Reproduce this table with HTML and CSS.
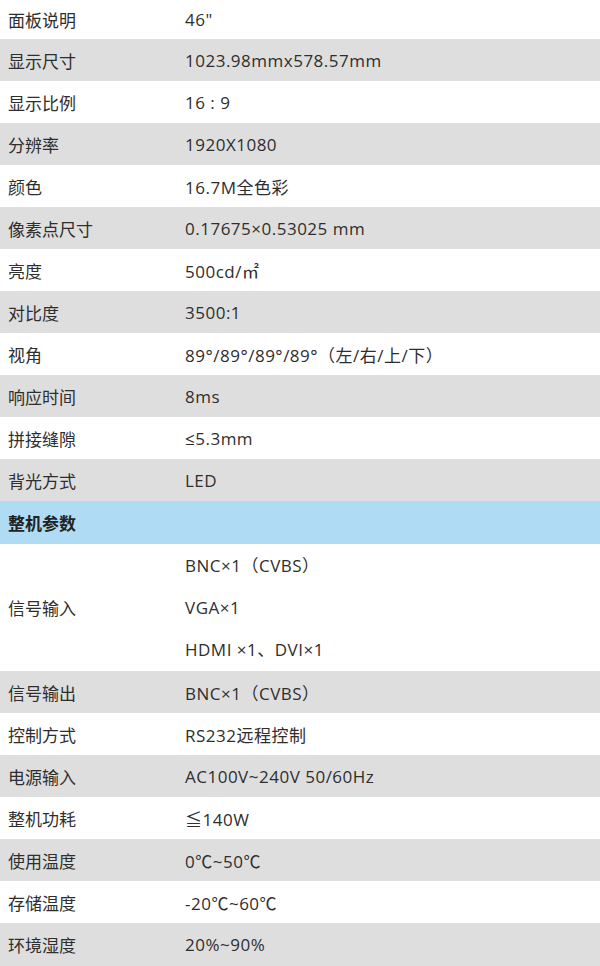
FILE: index.html
```html
<!DOCTYPE html>
<html lang="zh">
<head>
<meta charset="utf-8">
<link rel="stylesheet" href="styles.css">
</head>
<body>
<div class="spec">
  <div class="row first"><div class="k">面板说明</div><div class="v">46"</div></div>
  <div class="row alt"><div class="k">显示尺寸</div><div class="v">1023.98mmx578.57mm</div></div>
  <div class="row"><div class="k">显示比例</div><div class="v">16 : 9</div></div>
  <div class="row alt"><div class="k">分辨率</div><div class="v">1920X1080</div></div>
  <div class="row"><div class="k">颜色</div><div class="v">16.7M全色彩</div></div>
  <div class="row alt"><div class="k">像素点尺寸</div><div class="v">0.17675×0.53025 mm</div></div>
  <div class="row"><div class="k">亮度</div><div class="v">500cd/㎡</div></div>
  <div class="row alt"><div class="k">对比度</div><div class="v">3500:1</div></div>
  <div class="row"><div class="k">视角</div><div class="v">89°/89°/89°/89°（左/右/上/下）</div></div>
  <div class="row alt"><div class="k">响应时间</div><div class="v">8ms</div></div>
  <div class="row"><div class="k">拼接缝隙</div><div class="v">≤5.3mm</div></div>
  <div class="row alt"><div class="k">背光方式</div><div class="v">LED</div></div>
  <div class="row head"><div class="k">整机参数</div><div class="v"></div></div>
  <div class="row tall"><div class="k">信号输入</div><div class="v multi"><span>BNC×1（CVBS）</span><span>VGA×1</span><span>HDMI ×1、DVI×1</span></div></div>
  <div class="row alt"><div class="k">信号输出</div><div class="v">BNC×1（CVBS）</div></div>
  <div class="row"><div class="k">控制方式</div><div class="v">RS232远程控制</div></div>
  <div class="row alt"><div class="k">电源输入</div><div class="v">AC100V~240V 50/60Hz</div></div>
  <div class="row"><div class="k">整机功耗</div><div class="v">≦140W</div></div>
  <div class="row alt"><div class="k">使用温度</div><div class="v">0℃~50℃</div></div>
  <div class="row"><div class="k">存储温度</div><div class="v">-20℃~60℃</div></div>
  <div class="row alt last"><div class="k">环境湿度</div><div class="v">20%~90%</div></div>
</div>
</body>
</html>
```
FILE: styles.css
```css
html, body {
  margin: 0;
  padding: 0;
  background: #ffffff;
}
body {
  width: 600px;
  height: 966px;
  overflow: hidden;
  font-family: "Open Sans", "Noto Sans CJK SC", sans-serif;
  font-size: 17px;
  color: #2e2e2e;
}
.spec {
  display: flex;
  flex-direction: column;
}
.row {
  display: flex;
  align-items: center;
  height: 42px;
  background: #ffffff;
}
.row.first { height: 39px; }
.row.alt { background: #dedede; }
.row.head {
  height: 43px;
  background: #afdcf4;
}
.row.head .k {
  font-weight: bold;
  color: #222222;
}
.row.tall { height: 127px; }
.row.last { height: 43px; }
.k {
  width: 177px;
  padding-left: 8px;
  flex: none;
}
.v {
  flex: 1;
  letter-spacing: 0.5px;
}
.v.multi {
  display: flex;
  flex-direction: column;
}
.v.multi span {
  height: 42px;
  line-height: 42px;
}
```
